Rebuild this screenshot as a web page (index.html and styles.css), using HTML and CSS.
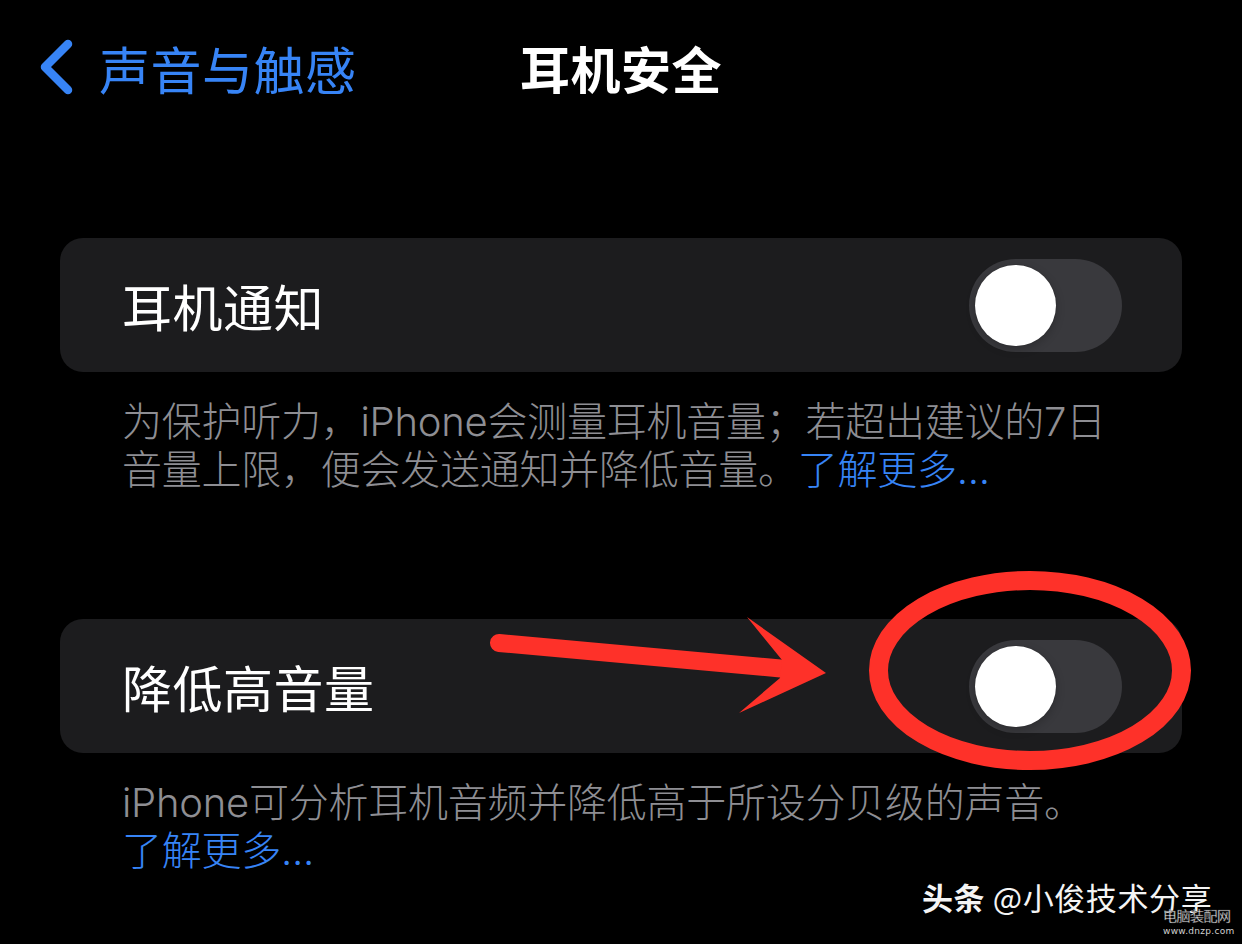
FILE: index.html
```html
<!DOCTYPE html>
<html lang="zh-CN">
<head>
    <meta charset="UTF-8">
    <meta name="viewport" content="width=device-width, initial-scale=1.0">
    <title>耳机安全</title>
    <link rel="stylesheet" href="styles.css">
</head>
<body>
    <div class="screen">
        <div class="nav">
            <a class="back">
                <svg class="chevron" width="34" height="56" viewBox="0 0 34 56">
                    <path d="M29 5 L6 28 L29 51" fill="none" stroke="currentColor" stroke-width="8.5" stroke-linecap="round" stroke-linejoin="round"/>
                </svg>
                <span>声音与触感</span>
            </a>
            <h1 class="title">耳机安全</h1>
            <div></div>
        </div>

        <div class="group">
            <div class="card">
                <span class="label">耳机通知</span>
                <div class="toggle"><div class="knob"></div></div>
            </div>
            <p class="footnote">为保护听力，iPhone会测量耳机音量；若超出建议的7日<br>音量上限，便会发送通知并降低音量。<a class="link">了解更多...</a></p>
        </div>

        <div class="group second">
            <div class="card">
                <span class="label">降低高音量</span>
                <div class="toggle"><div class="knob"></div></div>
            </div>
            <p class="footnote">iPhone可分析耳机音频并降低高于所设分贝级的声音。<br><a class="link">了解更多...</a></p>
        </div>

        <!-- red annotation drawn over the screenshot -->
        <svg class="markup" width="1242" height="944" viewBox="0 0 1242 944">
            <line x1="499" y1="643" x2="786" y2="669" stroke="#fe3129" stroke-width="18" stroke-linecap="round"/>
            <polygon points="782,660 747,617 826,673 739,713 780,678" fill="#fe3129"/>
            <ellipse cx="1030" cy="670.5" rx="151.5" ry="90" fill="none" stroke="#fe3129" stroke-width="19"/>
        </svg>

        <div class="watermark">
            <span class="brand"><b>头条</b> @小俊技术分享</span>
            <span class="site">电脑装配网</span>
            <span class="url">www.dnzp.com</span>
        </div>
    </div>
</body>
</html>
```

FILE: styles.css
```css
:root {
    --bg-color: #000000;
    --card-bg: #1c1c1e;
    --text-color: #ffffff;
    --muted-color: #8e8e93;
    --link-color: #3784f6;
    --track-color: #39393d;
    --mark-color: #fe3129;
}

* {
    margin: 0;
    padding: 0;
    box-sizing: border-box;
}

body {
    font-family: Inter, "Noto Sans CJK SC", sans-serif;
    background-color: var(--bg-color);
    color: var(--text-color);
}

.screen {
    position: relative;
    width: 1242px;
    height: 944px;
    overflow: hidden;
}

.nav {
    height: 134px;
    display: grid;
    grid-template-columns: 1fr auto 1fr;
    align-items: center;
}

.back {
    display: flex;
    align-items: center;
    gap: 26px;
    padding-left: 39px;
    color: var(--link-color);
    font-size: 51px;
    line-height: 1;
    font-family: "Noto Sans CJK SC", sans-serif;
    letter-spacing: 0.5px;
}

.back span {
    position: relative;
    top: 1px;
}

.title {
    font-size: 50px;
    font-weight: 600;
    line-height: 1;
    font-family: "Noto Sans CJK SC", sans-serif;
    letter-spacing: 0.5px;
}

.group {
    margin: 104px 60px 0;
}

.group.second {
    margin-top: 125px;
}

.card {
    height: 134px;
    background: var(--card-bg);
    border-radius: 23px;
    display: flex;
    align-items: center;
    justify-content: space-between;
    padding: 0 60px 0 62px;
}

.label {
    font-size: 50px;
    font-family: "Noto Sans CJK SC", sans-serif;
    line-height: 1;
    letter-spacing: 0.5px;
}

.toggle {
    width: 153px;
    height: 93px;
    border-radius: 47px;
    background: var(--track-color);
    padding: 6px;
}

.knob {
    width: 81px;
    height: 81px;
    border-radius: 50%;
    background: #ffffff;
    box-shadow: 0 0 0 1px rgba(0, 0, 0, 0.05), 0 3px 10px rgba(0, 0, 0, 0.22);
}

.footnote {
    margin-top: 26px;
    padding-left: 62px;
    font-size: 40px;
    font-weight: 300;
    line-height: 48px;
    color: var(--muted-color);
    letter-spacing: -0.25px;
}

.link {
    color: var(--link-color);
}

.markup {
    position: absolute;
    top: 0;
    left: 0;
}

.watermark {
    position: absolute;
    left: 922px;
    top: 876px;
    width: 320px;
    height: 68px;
}

.brand {
    font-family: "Noto Sans CJK SC", sans-serif;
    font-size: 31px;
    line-height: 42px;
    color: #f4f4f4;
    white-space: nowrap;
    letter-spacing: 0.6px;
}

.brand b {
    font-weight: 700;
}

.site {
    position: absolute;
    left: 241px;
    top: 31px;
    font-family: "Noto Sans CJK SC", sans-serif;
    font-size: 14px;
    line-height: 16px;
    color: #ffffff;
    letter-spacing: -0.5px;
    -webkit-text-stroke: 0.4px #333;
}

.url {
    position: absolute;
    left: 241px;
    top: 50px;
    font-family: "DejaVu Sans", sans-serif;
    font-size: 9px;
    line-height: 10px;
    color: #d0d0d0;
    letter-spacing: 0.3px;
}
```
